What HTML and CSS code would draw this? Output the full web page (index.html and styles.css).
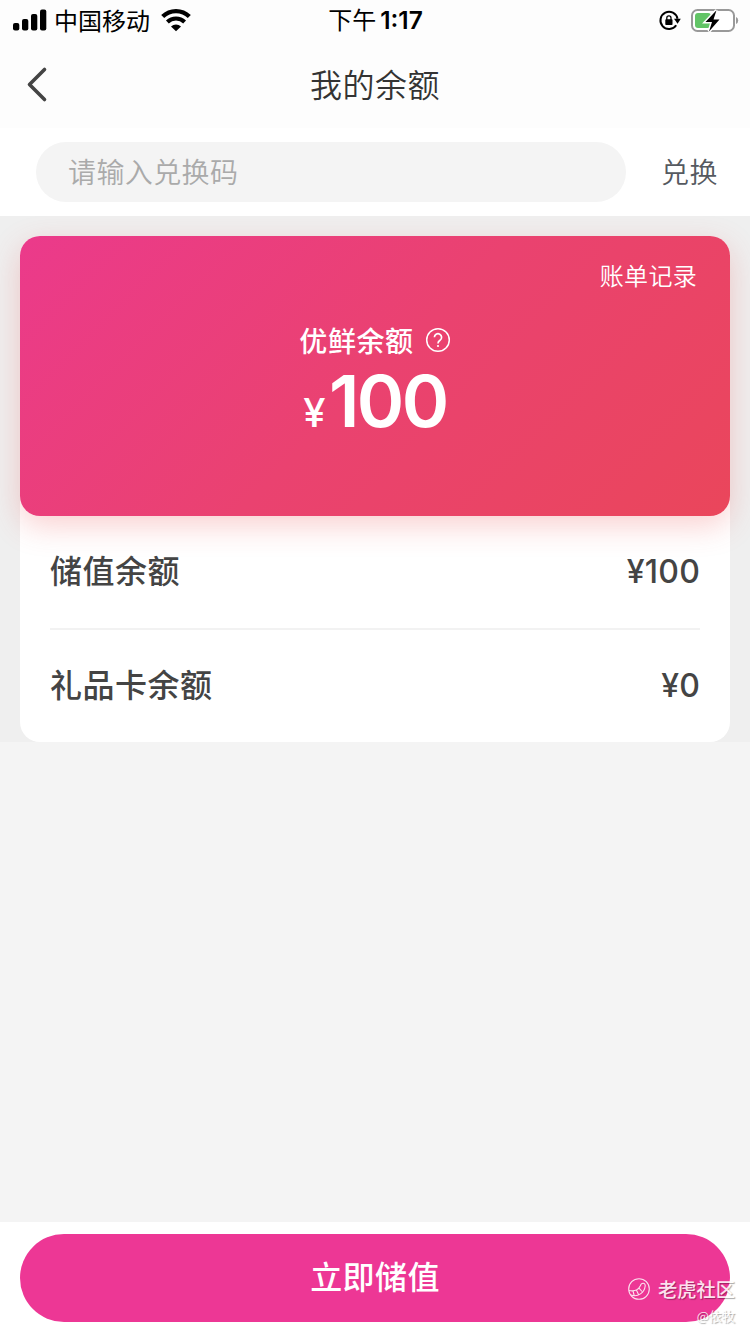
FILE: index.html
```html
<!DOCTYPE html>
<html lang="zh-CN">
<head>
<meta charset="utf-8">
<meta name="viewport" content="width=750">
<title>我的余额</title>
<link rel="stylesheet" href="styles.css">
</head>

<body>
<div class="status">
  <div class="status-left">
    <svg class="signal" width="34" height="22" viewBox="0 0 34 22">
      <rect x="0" y="13" width="6.3" height="7.5" rx="2"/>
      <rect x="9" y="9" width="6.3" height="11.5" rx="2"/>
      <rect x="18" y="4" width="6.3" height="16.5" rx="2"/>
      <rect x="27" y="-.5" width="6.3" height="21" rx="2"/>
    </svg>
    <span class="carrier">中国移动</span>
    <svg class="wifi" width="30" height="22" viewBox="0 0 30 22">
      <path d="M1.7 6.600a18.800 18.800 0 0 1 26.600 0" fill="none" stroke="#000" stroke-width="4.3"/>
      <path d="M6.4 12a12.200 12.200 0 0 1 17.200 0" fill="none" stroke="#000" stroke-width="4"/>
      <path d="M10 16.400a7.200 7.200 0 0 1 10 0L15 21.200z"/>
    </svg>
  </div>
  <div class="clock">下午<b>1:17</b></div>
  <div class="status-right">
    <svg width="22" height="22" viewBox="0 0 22 22">
      <path d="M17.2 15.200A8.600 8.600 0 1 1 18.500 8.800" fill="none" stroke="#000" stroke-width="2"/>
      <path d="M15 8.800h6.800l-3.200 5z"/>
      <rect x="6.300" y="9.200" width="7.200" height="5.800" rx=".8"/>
      <path d="M7.800 10V8a2.100 2.100 0 0 1 4.200 0v2" fill="none" stroke="#000" stroke-width="1.3"/>
    </svg>
    <svg class="battery" width="48" height="26" viewBox="0 0 48 26">
      <rect x="1" y="2" width="42" height="21" rx="5.5" fill="#fff" stroke="#999" stroke-width="2"/>
      <path d="M45 9v7q2.200-.8 2.200-3.500T45 9z" fill="#999"/>
      <rect x="4" y="5" width="16" height="15" rx="3" fill="#62c466"/>
      <path d="M25.500 2.200 14.500 14h6.500L18 23.500 28.500 11.500h-6z" stroke="#fff" stroke-width="3" paint-order="stroke"/>
    </svg>
  </div>
</div>

<div class="nav">
  <svg class="back" width="22" height="36" viewBox="0 0 22 36">
    <path d="M18.500 3.500 3.500 18.500l15 15" fill="none" stroke="#444" stroke-width="3.6" stroke-linecap="round" stroke-linejoin="round"/>
  </svg>
  <h1>我的余额</h1>
</div>

<div class="redeem">
  <div class="code">请输入兑换码</div>
  <div class="submit">兑换</div>
</div>

<div class="account">
  <div class="panel">
    <div class="card">
      <div class="history">账单记录</div>
      <div class="label">
        优鲜余额
        <svg width="26" height="26" viewBox="0 0 26 26">
          <circle cx="13" cy="13" r="11.300" fill="none" stroke="#fff" stroke-width="1.5"/>
          <path d="M9.400 10.300a3.600 3.600 0 1 1 5.600 3c-1.400.9-2 1.500-2 3.200" fill="none" stroke="#fff" stroke-width="1.7"/>
          <circle cx="13" cy="19" r="1.1" fill="#fff"/>
        </svg>
      </div>
      <div class="amount"><span class="yen">¥</span>100</div>
    </div>
    <div class="row"><span>储值余额</span><span class="num">¥100</span></div>
    <div class="row"><span>礼品卡余额</span><span class="num">¥0</span></div>
  </div>
</div>

<div class="footer">
  <div class="button">立即储值</div>
  <div class="mark">
    <div class="mark-name">
      <svg width="24" height="24" viewBox="0 0 24 24" fill="none" stroke="#fff" stroke-width="1.1">
        <circle cx="12" cy="12" r="10.300"/>
        <path d="M2 13.500c5 1 9 0 11.200-4.500 1.300-4 5.300-3.500 5 0C17.500 15.500 11 20.500 4 18M6 14l1.200 4.500M9.500 13.300l2 4.200M12 11.200l3 3.300"/>
      </svg>
      老虎社区
    </div>
    <div class="mark-user">@依牧</div>
  </div>
</div>
</body>

</html>
```

FILE: styles.css
```css
* {
  box-sizing: border-box;
}

body {
  margin: 0;
  height: 1334px;
  display: flex;
  flex-direction: column;
  background: #f4f4f4;
  color: #444;
  font-family: "Noto Sans CJK SC", sans-serif;
}

svg {
  display: block;
  flex: none;
  overflow: visible;
}

.status {
  height: 40px;
  flex: none;
  display: grid;
  grid-template-columns: 1fr auto 1fr;
  align-items: center;
  padding: 0 11px 0 13px;
  background: #fdfdfd;
  color: #000;
  font-size: 24px;
  line-height: 38px;
}

.status-left, .status-right {
  display: flex;
  align-items: center;
}

.status-right {
  justify-content: flex-end;
  gap: 10px;
}

.carrier {
  margin: 0 11px 2px 7px;
}

.clock {
  margin: 0 1px 2px 0;
}

.clock b {
  margin-left: 4px;
  font-family: Inter, sans-serif;
  font-size: 24.5px;
  font-weight: 600;
}

.nav {
  height: 88px;
  flex: none;
  display: grid;
  grid-template-columns: 1fr auto 1fr;
  align-items: center;
  padding: 0 26px;
  background: #fdfdfd;
}

.nav h1 {
  margin: 0 0 3px;
  color: #333;
  font-size: 32px;
  font-weight: 350;
  line-height: 48px;
  letter-spacing: 0.5px;
}

.redeem {
  height: 88px;
  flex: none;
  display: flex;
  align-items: center;
  padding: 0 31px 0 36px;
  background: #fff;
}

.code {
  width: 590px;
  height: 60px;
  padding-left: 32px;
  border-radius: 30px;
  background: #f4f4f4;
  color: #aaa;
  font-size: 28px;
  font-weight: 350;
  line-height: 58px;
  letter-spacing: 0.4px;
}

.submit {
  margin: 0 0 2px 35px;
  color: #555960;
  font-size: 28px;
  font-weight: 350;
  line-height: 58px;
  letter-spacing: 0.5px;
}

.account {
  flex: none;
  height: 526px;
  padding: 20px 20px 0;
  background: #efefef;
  overflow: hidden;
}

.panel {
  height: 506px;
  border-radius: 20px;
  background: #fff;
}

.card {
  height: 280px;
  padding-top: 20px;
  border-radius: 20px;
  background: linear-gradient(135deg, #eb3a8b, #ea4270 50%, #ea465b);
  box-shadow: 0 10px 30px rgba(234, 70, 70, 0.25);
  color: #fff;
}

.history {
  padding-right: 33px;
  text-align: right;
  font-size: 24px;
  font-weight: 350;
  line-height: 38px;
  letter-spacing: 0.3px;
}

.label {
  display: flex;
  justify-content: center;
  align-items: center;
  gap: 11px;
  margin-top: 26px;
  font-size: 28px;
  font-weight: 500;
  line-height: 40px;
  letter-spacing: 0.6px;
}

.amount {
  display: flex;
  justify-content: center;
  align-items: baseline;
  font-family: Inter, sans-serif;
  font-size: 72px;
  font-weight: 600;
  line-height: 82px;
  letter-spacing: -2.5px;
}

.yen {
  margin-right: 6px;
  font-size: 40px;
  font-weight: 500;
}

.row {
  height: 112px;
  display: flex;
  justify-content: space-between;
  align-items: center;
  margin: 0 30px;
  padding-bottom: 6px;
  font-size: 32px;
  font-weight: 500;
  letter-spacing: 0.5px;
}

.row + .row {
  height: 114px;
  border-top: 2px solid #f2f2f2;
}

.num {
  padding-top: 5px;
  font-family: Inter, sans-serif;
  letter-spacing: 0.2px;
}

.footer {
  position: relative;
  height: 112px;
  margin-top: auto;
  padding: 12px 20px 0;
  background: #fff;
}

.button {
  height: 88px;
  border-radius: 44px;
  background: #ed3795;
  color: #fff;
  text-align: center;
  font-size: 32px;
  font-weight: 500;
  line-height: 83px;
  letter-spacing: 0.4px;
}

/* community mark, sits over the button */
.mark {
  position: absolute;
  right: 15px;
  bottom: 6px;
  color: #fff;
  opacity: 0.85;
  text-align: right;
  text-shadow: 1px 1px 1px rgba(0, 0, 0, 0.4);
}

.mark-name {
  display: flex;
  align-items: center;
  gap: 7px;
  font-size: 19.3px;
  font-weight: 500;
  line-height: 30px;
}

.mark-user {
  font-size: 13px;
  line-height: 24px;
}
```
